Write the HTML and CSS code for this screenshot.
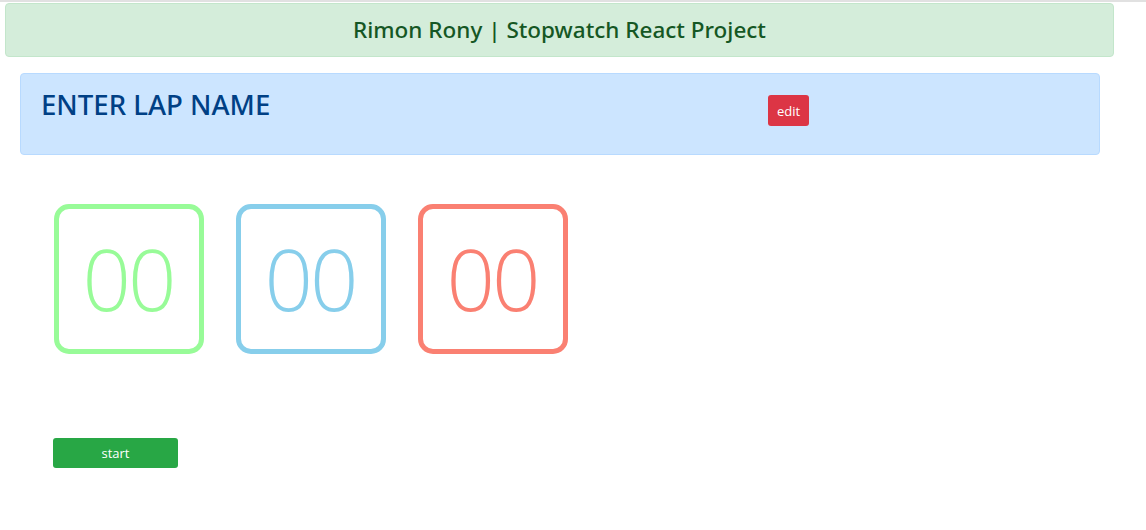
FILE: index.html
```html
<!DOCTYPE html>
<html>
<head>
<meta charset="utf-8">
<link rel="stylesheet" href="styles.css">
</head>
<body>
<div class="topline"></div>
<div class="page">
  <header class="banner">Rimon Rony | Stopwatch React Project</header>
  <section class="lap">
    <h3 class="lap-title">ENTER LAP NAME</h3>
    <button class="btn btn-edit">edit</button>
  </section>
  <div class="timers">
    <div class="timer timer-green">00</div>
    <div class="timer timer-blue">00</div>
    <div class="timer timer-red">00</div>
  </div>
  <div class="controls">
    <button class="btn btn-start">start</button>
  </div>
</div>
</body>
</html>
```
FILE: styles.css
```css
html, body {
  margin: 0;
  padding: 0;
  background: #fff;
  font-family: "Open Sans", "Noto Sans", sans-serif;
}
.topline {
  height: 2px;
  background: #e1e1e1;
}
.page {
  width: 1109px;
  padding: 1px 0 0 5px;
}
.banner {
  box-sizing: border-box;
  height: 54px;
  background: #d4edda;
  border: 1px solid #c3e6cb;
  border-radius: 4px;
  color: #155724;
  font-family: "Noto Sans", "Open Sans", sans-serif;
  font-size: 22.5px;
  font-weight: 500;
  display: flex;
  align-items: center;
  justify-content: center;
  padding-bottom: 1px;
}
.lap {
  box-sizing: border-box;
  margin: 16px 14px 0 15px;
  height: 82px;
  background: #cce5ff;
  border: 1px solid #b8daff;
  border-radius: 4px;
  display: grid;
  grid-template-columns: 727px auto;
  align-items: start;
  padding: 13px 20px 0 20px;
}
.lap-title {
  margin: 0;
  color: #004085;
  font-family: "Noto Sans", "Open Sans", sans-serif;
  font-size: 27.6px;
  font-weight: 500;
  line-height: 34px;
}
.btn {
  border: none;
  color: #fff;
  font-family: "Open Sans", "Noto Sans", sans-serif;
  font-size: 13px;
  border-radius: 3px;
  padding: 0;
  cursor: pointer;
}
.btn-edit {
  margin-top: 8px;
  width: 41px;
  height: 31px;
  background: #dc3545;
  justify-self: start;
}
.timers {
  display: flex;
  gap: 32px;
  margin: 49px 0 0 49px;
}
.timer {
  box-sizing: border-box;
  width: 150px;
  height: 150px;
  border: 5px solid;
  border-radius: 15px;
  display: flex;
  align-items: center;
  justify-content: center;
  font-family: "Open Sans", sans-serif;
  font-weight: 300;
  font-size: 85px;
  letter-spacing: -3px;
  padding: 0 2px 2px 0;
}
.timer-green { border-color: #98fb98; color: #98fb98; }
.timer-blue { border-color: #87ceeb; color: #87ceeb; }
.timer-red { border-color: #fa8072; color: #fa8072; }
.controls {
  margin: 84px 0 0 48px;
}
.btn-start {
  width: 125px;
  height: 30px;
  background: #28a745;
}
```
